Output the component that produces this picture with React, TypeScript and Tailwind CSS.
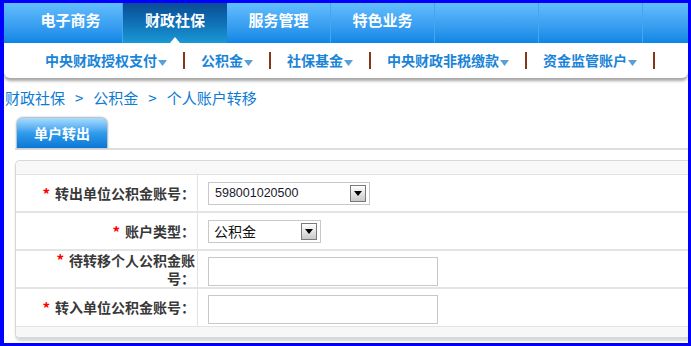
import React from "react";

const CJK = '"Noto Sans CJK SC", "Liberation Sans", sans-serif';

function Arrow() {
  return (
    <svg width="9" height="6" viewBox="0 0 9 6" className="ml-[1px] mt-[4px]">
      <path d="M0 0 L9 0 L4.5 6 Z" fill="#5b9fd6" />
    </svg>
  );
}

function Sep() {
  return <span className="mx-[16px] inline-block h-[17px] w-[2px] bg-[#86351a]" />;
}

function DropBtn() {
  return (
    <div className="flex h-[17px] w-[16px] items-center justify-center border border-[#7a7a7a] bg-gradient-to-b from-[#ffffff] to-[#c9c9c9]">
      <svg width="8" height="5" viewBox="0 0 8 5">
        <path d="M0 0 L8 0 L4 5 Z" fill="#000" />
      </svg>
    </div>
  );
}

function Label({ children }: { children: React.ReactNode }) {
  return (
    <div className="flex w-[182px] shrink-0 items-center justify-end border-r border-[#e2e2e2] pr-[2px] text-right text-[14px] font-bold leading-[17px] text-[#383838]">
      {children}
    </div>
  );
}

function Star() {
  return <span className="mr-[5px] text-[15px] font-bold text-[#ff0000]">*</span>;
}

export default function App() {
  const subItems = ["中央财政授权支付", "公积金", "社保基金", "中央财政非税缴款", "资金监管账户"];
  return (
    <div
      className="box-border h-[346px] w-[691px] overflow-hidden border-b-[3px] border-l-4 border-r-[3px] border-t-[3px] border-solid border-[#0000ff] bg-white"
      style={{ fontFamily: CJK }}
    >
      {/* top nav */}
      <div className="flex h-[40px] bg-gradient-to-b from-[#62befd] to-[#0a86e6] pl-[15px]">
        {["电子商务", "财政社保", "服务管理", "特色业务", "", "", ""].map((t, i) =>
          i === 1 ? (
            <div
              key={i}
              className="relative flex h-full w-[104px] shrink-0 items-center justify-center bg-gradient-to-b from-[#0b4b95] to-[#1a98d6] pb-[5px] text-[15px] font-bold text-white"
            >
              {t}
              <svg width="10" height="6" viewBox="0 0 10 6" className="absolute bottom-0 left-[47px]">
                <path d="M0 6 L5 0 L10 6 Z" fill="#fff" />
              </svg>
            </div>
          ) : (
            <div
              key={i}
              className="flex h-full w-[104px] shrink-0 items-center justify-center border-r border-[#45a5ee] pb-[5px] text-[15px] font-bold text-white"
            >
              {t}
            </div>
          )
        )}
      </div>

      {/* sub nav */}
      <div className="relative z-10 flex h-[35px] items-center rounded-b-[6px] bg-white pl-[41px] shadow-[0_3px_3px_rgba(0,0,0,0.35)]">
        {subItems.map((t) => (
          <React.Fragment key={t}>
            <span className="flex items-center text-[14px] font-bold text-[#1a84d8]">
              {t}
              <Arrow />
            </span>
            <Sep />
          </React.Fragment>
        ))}
      </div>

      {/* breadcrumb */}
      <div className="mt-[10px] flex h-[20px] items-center pl-[1px] text-[15px] leading-[20px] text-[#0b7bd3]">
        财政社保<span className="mx-[10px]">&gt;</span>公积金<span className="mx-[10px]">&gt;</span>个人账户转移
      </div>

      {/* tab */}
      <div className="ml-[11px] mt-[9px] border-b-2 border-[#dddddd]">
        <div className="ml-[1px] flex h-[31px] w-[92px] items-center justify-center rounded-t-[7px] border border-b-0 border-[#b8c4cf] bg-gradient-to-b from-[#a8dcfd] via-[#2f9cec] to-[#0877d5] text-[14px] font-bold text-white shadow-[0_0_2px_rgba(0,0,0,0.25)]">
          单户转出
        </div>
      </div>

      {/* panel */}
      <div className="ml-[11px] mt-[10px] rounded-l-[5px] border-b-2 border-l border-t border-[#d8d8d8] shadow-[0_2px_2px_rgba(0,0,0,0.15)]">
        <div className="h-[14px] rounded-tl-[5px] border-b border-[#e2e2e2] bg-[#f8f8f8]" />

        <div className="flex h-[38px] border-b-2 border-[#e4e4e4] bg-white">
          <Label>
            <Star />
            转出单位公积金账号：
          </Label>
          <div className="flex items-center pl-[10px]">
            <div className="flex h-[23px] w-[162px] items-center justify-between border border-[#c8c8c8] pl-[6px] pr-[3px]">
              <span className="text-[12.5px] text-[#1a1a2a]" style={{ fontFamily: '"Liberation Sans", sans-serif' }}>
                598001020500
              </span>
              <DropBtn />
            </div>
          </div>
        </div>

        <div className="flex h-[38px] border-b-2 border-[#e4e4e4] bg-white">
          <Label>
            <Star />
            账户类型：
          </Label>
          <div className="flex items-center pl-[10px]">
            <div className="flex h-[23px] w-[113px] items-center justify-between border border-[#c8c8c8] pl-[5px] pr-[3px]">
              <span className="text-[14px] text-[#111]">公积金</span>
              <DropBtn />
            </div>
          </div>
        </div>

        <div className="flex h-[38px] border-b-2 border-[#e4e4e4] bg-white">
          <Label>
            <div className="flex flex-col items-end leading-[18px]">
              <span>
                <Star />
                待转移个人公积金账
              </span>
              <span>号：</span>
            </div>
          </Label>
          <div className="flex items-center pl-[10px] pt-[4px]">
            <div className="h-[29px] w-[230px] border border-[#c8c8c8] bg-white" />
          </div>
        </div>

        <div className="flex h-[38px] border-b border-[#e4e4e4] bg-white">
          <Label>
            <Star />
            转入单位公积金账号：
          </Label>
          <div className="flex items-center pl-[10px] pt-[4px]">
            <div className="h-[29px] w-[230px] border border-[#c8c8c8] bg-white" />
          </div>
        </div>

        <div className="h-[10px] rounded-bl-[5px] bg-[#f7f7f7]" />
      </div>
    </div>
  );
}
